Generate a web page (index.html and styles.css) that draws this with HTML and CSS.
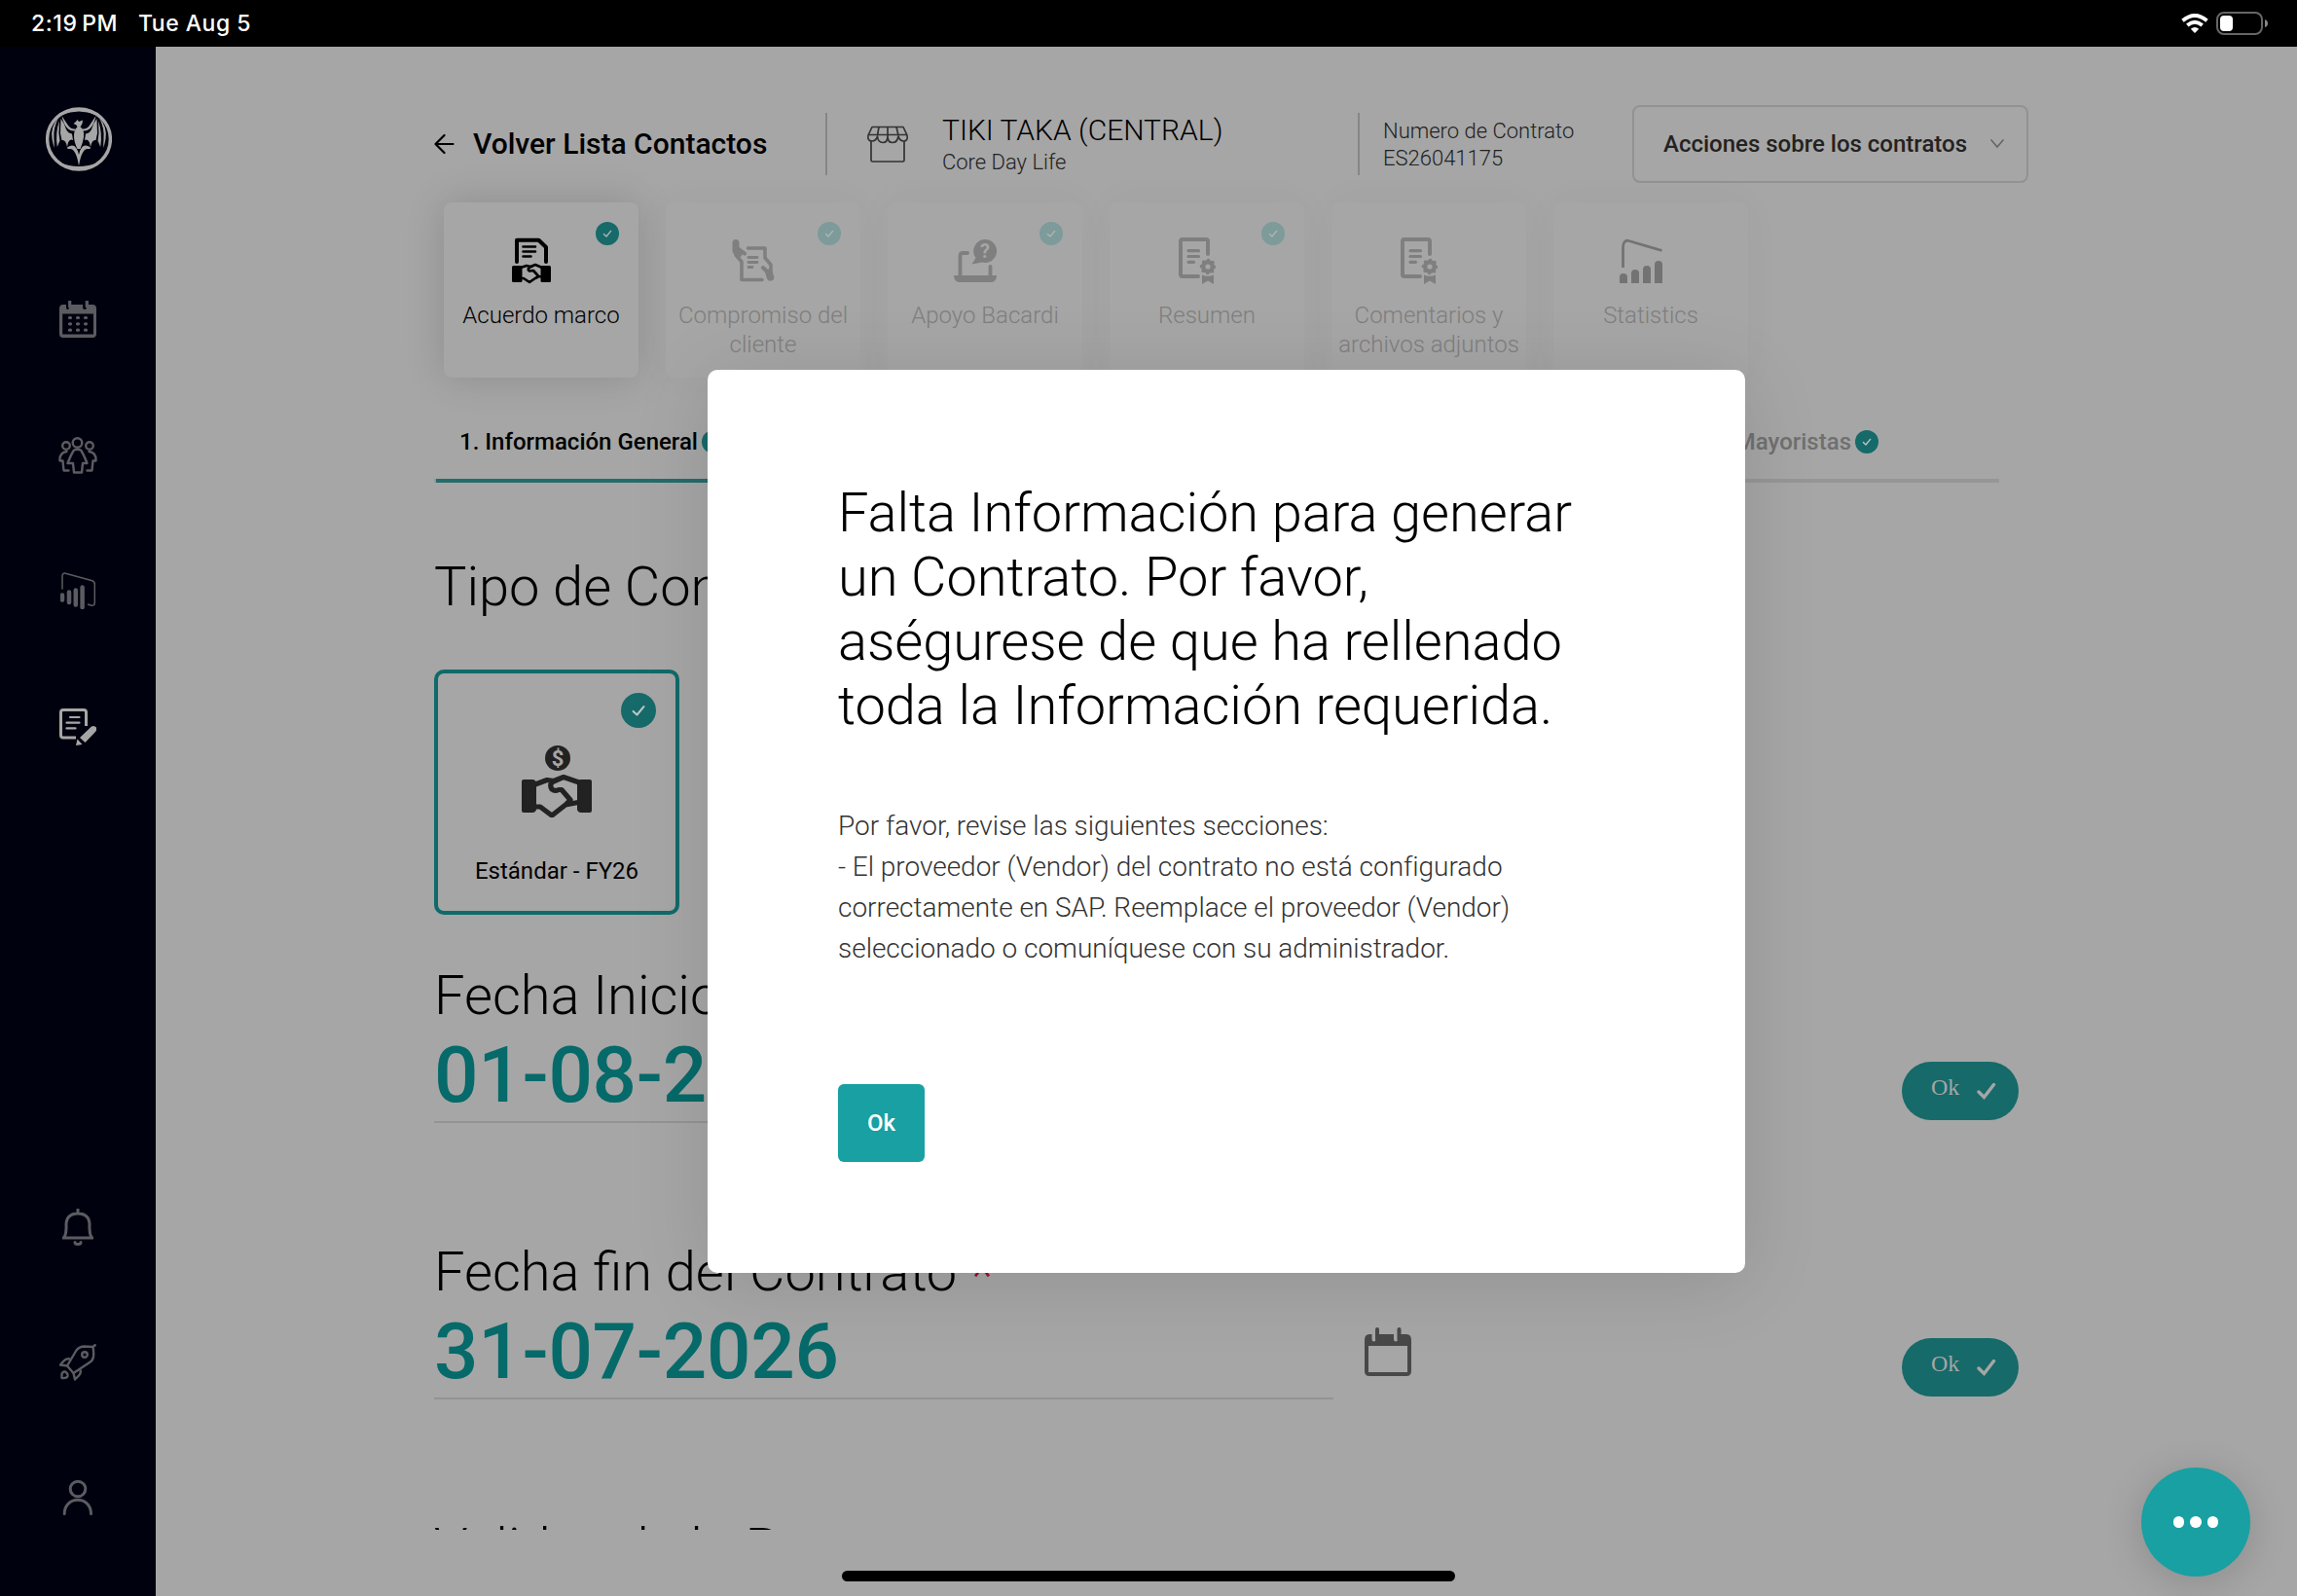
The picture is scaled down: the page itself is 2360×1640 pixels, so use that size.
FILE: index.html
```html
<!DOCTYPE html>
<html lang="es">
<head>
<meta charset="utf-8">
<title>Contratos</title>
<link rel="stylesheet" href="styles.css">
</head>
<body>
<svg class="defs" width="0" height="0">
  <symbol id="check" viewBox="0 0 24 24"><path d="M8.4 12.6 11 15 15.6 9.4" fill="none" stroke="currentColor" stroke-width="1.4" stroke-linecap="round" stroke-linejoin="round"/></symbol>
  <symbol id="certificate" viewBox="0 0 38 48">
    <path d="M20 40H4Q2 40 2 38V4Q2 2 4 2H28Q30 2 30 4V17" fill="none" stroke="currentColor" stroke-width="4" stroke-linecap="round"/>
    <path d="M10 13.7H20.500M10 19.500H20.500M10 25.300H15.500" stroke="currentColor" stroke-width="3.200" stroke-linecap="round"/>
    <circle cx="30" cy="30" r="4.800" fill="none" stroke="currentColor" stroke-width="4.400"/>
    <circle cx="30" cy="30" r="7" fill="none" stroke="currentColor" stroke-width="2.600" stroke-linecap="round" stroke-dasharray="0.500 4.998"/>
    <path d="M24 38.500Q30 41 36 38.500V48L30 44.500 24 48Z" fill="currentColor"/>
  </symbol>
  <symbol id="calendar" viewBox="0 0 48 50">
    <path d="M0 13Q0 7 5 7H7.500V12Q7.500 14.500 9.500 14.500T11.500 12V7H30V12Q30 14.500 32 14.500T34 12V7H43Q48 7 48 13V45Q48 50 43 50H5Q0 50 0 45ZM4 19V46H44V19Z" fill="currentColor" fill-rule="evenodd"/>
    <path d="M13 2V12M35.500 2V12" stroke="currentColor" stroke-width="4" stroke-linecap="round"/>
  </symbol>
</svg>

<header class="status">
  <span class="status-time">2:19&#8201;PM</span>
  <span class="status-date">Tue Aug 5</span>
  <svg class="wifi" width="28" height="20" viewBox="0 0 28 20" fill="none" stroke="#fff" stroke-width="3.800"><path d="M1.500 7.200Q14-3.200 26.500 7.200"/><path d="M6.300 12Q14 5.600 21.700 12"/><path d="M14 20 9.800 15.800Q14 12 18.200 15.800Z" fill="#fff" stroke="none"/></svg>
  <svg class="battery" width="54" height="24" viewBox="0 0 54 24"><rect x="1" y="1" width="46" height="22" rx="7" fill="none" stroke="#666" stroke-width="2"/><rect x="4" y="4" width="13" height="16" rx="4" fill="#fff"/><path d="M50 8Q53 9 53 12T50 16Z" fill="#888"/></svg>
</header>

<div class="shell">
  <nav class="sidebar">
    <svg class="logo" width="68" height="66" viewBox="0 0 68 66">
      <ellipse cx="34" cy="33" rx="32.400" ry="31" fill="none" stroke="currentColor" stroke-width="3.400"/>
      <path d="M16 8Q34-3 52 8 34 1 16 8ZM14 57Q34 71 54 57 34 65 14 57Z" fill="currentColor"/>
      <g id="wing" fill="currentColor">
        <path d="M16.500 9Q21 16 23.500 19.500 26 23 30.500 22.500L30 24.500Q26 25 23 22.500 18 18 16.500 9Z"/>
        <path d="M15.500 12Q19.500 17 21 23 23 27 27 27.500L28 34Q25 32 23 36.500L22 41Q20.500 33 16.500 34L15 27Z"/>
        <path d="M14 14 13.500 27 14.500 34.500 11.800 41Q9.500 27 14 14Z"/>
        <path d="M13 11.500Q4.500 20 6.500 33L8.500 42Q9 38 8.500 33 7.500 21 13 11.500Z"/>
      </g>
      <use href="#wing" transform="matrix(-1 0 0 1 68 0)"/>
      <path d="M28.500 17 30.500 15.500 32.500 13 34 15 38 13.500 37.500 17 35.500 20.500Q40 23 39 31 38 37 35.500 43H32.500Q29 36 29 30 29 23 32.500 20.500L31.500 18.500Z" fill="currentColor"/>
      <path d="M22 41.500Q31 35 34 49 37 35 46 41.500 46 43.500 44 43 37 41.500 34 60.500 31 41.500 24 43 22 43.500 22 41.500Z" fill="currentColor"/>
    </svg>
    <div class="nav-group nav-main">
      <svg width="38" height="38" viewBox="0 0 38 38"><path d="M0 8Q0 4 4 4H7V7Q7 9 8.500 9T10 7V4H24V7Q24 9 26 9T28 7V4H34Q38 4 38 8V34Q38 38 34 38H4Q0 38 0 34ZM3.200 13.500V34.500H35V13.500Z" fill="currentColor" fill-rule="evenodd"/><path d="M10.700 0V7M28.300 0V7" stroke="currentColor" stroke-width="3.200"/><path d="M10.500 17.500h1M18.500 17.500h1M26.500 17.500h1M10.500 23.800h1M18.500 23.800h1M26.500 23.800h1M10.500 30.200h1M18.500 30.200h1M26.500 30.200h1" stroke="currentColor" stroke-width="3.200" stroke-linecap="round"/></svg>
      <svg width="40" height="38" viewBox="0 0 40 38" fill="none" stroke="currentColor" stroke-width="2.400" stroke-linejoin="round" stroke-linecap="round"><circle cx="19.500" cy="6" r="4.800"/><circle cx="8" cy="9" r="3.800"/><circle cx="32" cy="9" r="3.800"/><path d="M16 13.500Q19.500 12 23 13.500 26 18 29.500 27H25L24 36.500H16L15 27H9.500Q13 18 16 13.500Z"/><path d="M8.500 15Q1 16 1.500 24.500H4.500L5.500 34.500H10.500M31.500 15Q39 16 38.500 24.500H35.500L34.500 34.500H29.500"/></svg>
      <svg width="36" height="38" viewBox="0 0 36 38" fill="none" stroke="currentColor"><path d="M2 17.500V4Q2 .5 5.500 1.200L32 8.500Q35.300 9.500 35.300 12V31Q35.300 35 31.500 34L28 33" stroke-width="1.500"/><path d="M2 23.500V28.500M9 20.500V31M15.800 18.500V33.500M22.600 15.500V36" stroke-width="4.500" stroke-linecap="round"/></svg>
      <svg class="current" width="38" height="38" viewBox="0 0 38 38"><path d="M17 30H4Q1.500 30 1.500 27.500V4Q1.500 1.500 4 1.500H25Q27.500 1.500 27.500 4V18" fill="none" stroke="currentColor" stroke-width="3"/><path d="M11 9H20.500M7.500 14.700H20.500M7.500 20.400H16.500" stroke="currentColor" stroke-width="2.200" stroke-linecap="round"/><path d="M21 30 33 18.500Q36 17 38 19.500 39 22 37 24L26.500 35Z" fill="currentColor"/><path d="M18.500 31.500 23.500 37 17 38Z" fill="currentColor"/></svg>
    </div>
    <div class="nav-group nav-foot">
      <svg width="32" height="38" viewBox="0 0 32 38" fill="none" stroke="currentColor" stroke-width="3"><path d="M16 0V4M2 30Q4.500 25 4 17 4 5 16 5T28 17Q27.500 25 30 30ZM0 30H32"/><path d="M13 34.500Q13 36.500 16 36.500T19 34.500" stroke-linecap="round"/></svg>
      <svg width="38" height="38" viewBox="0 0 38 38" fill="none" stroke="currentColor" stroke-width="2.400" stroke-linejoin="round"><path d="M8 22.500 17.500 6.500Q20 3 25 2.500L34.500 3Q35.500 8 35 13 34.500 17 31 19L14.500 30ZM34.500 3 37.500 .5"/><circle cx="26" cy="11" r="2.800"/><path d="M11 15.500Q7 14.500 4 18L1 21.500 8 22.500M14.500 30 16 36.500 20 32.500Q22.500 30 21.500 26.500M2.500 35V31Q3 28 6 28.500 9 30 8.500 33 8 35.500 2.500 35Z"/></svg>
      <svg width="32" height="38" viewBox="0 0 32 38" fill="none" stroke="currentColor" stroke-width="3" stroke-linecap="round"><circle cx="16" cy="10" r="7.800"/><path d="M2.200 35.500C2.200 16.500 29.500 16.500 29.500 35.500"/></svg>
    </div>
  </nav>

  <main class="page">
    <div class="topbar">
      <a class="back"><svg width="22" height="22" viewBox="0 0 22 22" fill="none" stroke="currentColor" stroke-width="2.200" stroke-linecap="round" stroke-linejoin="round"><path d="M19.500 11H1.500M10.500 2 1.500 11 10.500 20"/></svg><span>Volver Lista Contactos</span></a>
      <div class="account">
        <svg width="44" height="40" viewBox="0 0 44 40" fill="none" stroke="#333" stroke-width="1.700" stroke-linejoin="round"><path d="M6 2.500H38L42 11Q43 17 38.500 17 34.500 17 33 12 32 18.500 27 18.500 22 18.500 22 12 22 18.500 17 18.500 12 18.500 11.500 12 10 17 6 17 1 17 2 11ZM2 10.500H42M13 2.500 11.500 11M22 2.500V12M31 2.500 33 11"/><path d="M5 17V36.500Q5 38 6.500 38H37.500Q39 38 39 36.500V17"/></svg>
        <div><div class="account-name">TIKI TAKA (CENTRAL)</div><div class="small">Core Day Life</div></div>
      </div>
      <div class="number small">Numero de Contrato<br>ES26041175</div>
      <div class="actions"><span>Acciones sobre los contratos</span><svg width="16" height="12" viewBox="0 0 16 12"><path d="M2 2 8 9 14 2" fill="none" stroke="#666" stroke-width="1.700" stroke-linecap="round"/></svg></div>
    </div>

    <div class="steps">
      <div class="step active"><svg class="badge"><use href="#check"/></svg>
        <svg width="40" height="48" viewBox="0 0 40 48"><path d="M5 25V2.700H27.500L35 10V25" fill="none" stroke="currentColor" stroke-width="4" stroke-linecap="round" stroke-linejoin="round"/><path d="M11.500 9.500H24M11.500 14.500H24M11.500 19.500H19.500" stroke="currentColor" stroke-width="2.600" stroke-linecap="round"/><rect y="29" width="10.500" height="17" rx="1.500"/><rect x="29.500" y="29" width="10.500" height="17" rx="1.500"/><path d="M9 31 15 29 19 30 24 28 31 31M9 42H12L18 46 26 40.500 31 40M22 29 17.500 31Q16 33 18 34.500L22 34 27 39.500 25 42" fill="none" stroke="currentColor" stroke-width="2.700" stroke-linejoin="round"/></svg>
        <span>Acuerdo marco</span></div>
      <div class="step"><svg class="badge"><use href="#check"/></svg>
        <svg width="44" height="44" viewBox="0 0 44 44" fill="none" stroke="currentColor" stroke-linecap="round" stroke-linejoin="round"><path d="M16.500 9H34V19L40 26V34" stroke-width="3.500"/><path d="M4 10V16L10 23V41.500H31" stroke-width="3.500"/><path d="M4 3.500V12L7 15" stroke-width="7"/><path d="M7 10 13 14.500M32 29 38 35" stroke-width="4"/><path d="M38 34 39.500 39" stroke-width="7.500"/><path d="M17 18.500H26M17 23.500H26M17 28.500H21" stroke-width="2.800"/></svg>
        <span>Compromiso del cliente</span></div>
      <div class="step"><svg class="badge"><use href="#check"/></svg>
        <svg width="44" height="44" viewBox="0 0 44 44"><path d="M14 14H9.500Q6.500 14 6.500 17V38M37.500 28V38" fill="none" stroke="currentColor" stroke-width="3.800" stroke-linecap="round"/><path d="M0 37H44V38Q43 44 38 44H6Q1 44 0 38Z"/><path d="M32 0A12 12 0 1 1 29 23.600L18.500 25.500 22.500 19A12 12 0 0 1 32 0Z"/><text x="32" y="18.500" class="glyph" font-size="20">?</text></svg>
        <span>Apoyo Bacardi</span></div>
      <div class="step"><svg class="badge"><use href="#check"/></svg><svg width="38" height="48"><use href="#certificate"/></svg><span>Resumen</span></div>
      <div class="step"><svg width="38" height="48"><use href="#certificate"/></svg><span>Comentarios y archivos adjuntos</span></div>
      <div class="step stats"><svg width="44" height="46" viewBox="0 0 44 46"><path d="M3.500 30V9Q4 1 9.500 2.500L43.500 12.500" fill="none" stroke="currentColor" stroke-width="2.800"/><path d="M0 46V40Q0 36 4 36T8 40V46ZM12 46V36Q12 32 16 32T20 36V46ZM24 46V32Q24 28 28 28T32 32V46ZM36 46V27Q36 23 40 23T44 27V46Z"/></svg><span>Statistics</span></div>
    </div>

    <div class="tabs">
      <div class="tab tab-active">1. Información General<svg class="badge"><use href="#check"/></svg></div>
      <div class="tab">4. Mayoristas<svg class="badge"><use href="#check"/></svg></div>
    </div>

    <section class="scroller">
      <h2>Tipo de Contrato</h2>
      <div class="type-card">
        <svg class="badge"><use href="#check"/></svg>
        <svg width="72" height="74" viewBox="0 0 72 74"><circle cx="37" cy="13" r="13"/><text x="37" y="21" class="glyph" font-size="22">$</text><path d="M0 37Q0 35 2 35H11Q14 35 15 38V66Q14 69 11 69H2Q0 69 0 67ZM72 37Q72 35 70 35H61Q58 35 57 38V66Q58 69 61 69H70Q72 69 72 67Z"/><path d="M14 40 26 35.500 33 36.500 43 32.500 59 38M14 63H19L31 72 45 61 58 58.500M41 33.500 31 38Q28.500 41 31 45 34 47.500 38 45.500H41L50 56 45 61" fill="none" stroke="currentColor" stroke-width="5.200" stroke-linejoin="round"/></svg>
        <span>Estándar - FY26</span>
      </div>
      <div class="field">
        <div class="field-main"><h2>Fecha Inicio</h2><div class="date">01-08-2025</div></div>
        <svg class="cal" width="48" height="50"><use href="#calendar"/></svg>
        <div class="pill">Ok<svg width="22" height="20" viewBox="0 0 22 20"><path d="M3 11 8.500 16.500 18.500 3.500" fill="none" stroke="currentColor" stroke-width="3.400" stroke-linecap="round"/></svg></div>
      </div>
      <div class="field">
        <div class="field-main"><h2>Fecha fin del Contrato <i>*</i></h2><div class="date">31-07-2026</div></div>
        <svg class="cal" width="48" height="50"><use href="#calendar"/></svg>
        <div class="pill">Ok<svg width="22" height="20" viewBox="0 0 22 20"><path d="M3 11 8.500 16.500 18.500 3.500" fill="none" stroke="currentColor" stroke-width="3.400" stroke-linecap="round"/></svg></div>
      </div>
      <h2>Validez de la Propuesta</h2>
    </section>
  </main>
</div>

<div class="modal">
  <h1>Falta Información para generar un Contrato. Por favor, aségurese de que ha rellenado toda la Información requerida.</h1>
  <p>Por favor, revise las siguientes secciones:<br>- El proveedor (Vendor) del contrato no está configurado correctamente en SAP. Reemplace el proveedor (Vendor) seleccionado o comuníquese con su administrador.</p>
  <button>Ok</button>
</div>
<div class="fab"><b></b><b></b><b></b></div>
<div class="home"></div>
</body>
</html>
```
FILE: styles.css
```css
* { box-sizing: border-box; }
body {
  margin: 0;
  width: 2360px;
  height: 1640px;
  position: relative;
  overflow: hidden;
  display: flex;
  flex-direction: column;
  background: #a6a6a6;
  color: #000;
  font-family: Roboto, "Liberation Sans", sans-serif;
}
svg { display: block; flex: none; fill: currentColor; }
.defs { position: absolute; }

.status {
  height: 48px;
  flex: none;
  background: #000;
  color: #fff;
  display: flex;
  align-items: center;
  padding: 0 29px 0 32px;
  font: 500 23px/48px Inter, sans-serif;
}
.status-time { width: 110px; white-space: nowrap; letter-spacing: .6px; }
.status-date { letter-spacing: .5px; }
.wifi { margin-left: auto; margin-right: 8px; fill: none; }

.shell { flex: 1; display: flex; min-height: 0; }
.sidebar {
  width: 160px;
  background: #00010e;
  color: #5b5b62;
  display: flex;
  flex-direction: column;
  align-items: center;
  padding: 62px 0 82px;
}
.logo { color: #a6a6a6; margin-left: 2px; }
.nav-group { display: flex; flex-direction: column; align-items: center; }
.nav-main { margin-top: 133px; gap: 101.6px; }
.nav-foot { margin-top: auto; gap: 101px; }
.current { color: #a6a6a6; }
.sidebar svg[fill="none"] { fill: none; }

.page { flex: 1; padding: 60px 276px 0 286px; }
.topbar { display: flex; align-items: center; height: 80px; }
.back {
  display: flex;
  align-items: center;
  gap: 18px;
  width: 402px;
  font-size: 30px;
  font-weight: 500;
  line-height: 38px;
  padding-bottom: 1px;
}
.back svg, .account svg { fill: none; }
.account {
  display: flex;
  align-items: center;
  gap: 34px;
  width: 547px;
  height: 64px;
  padding-left: 40px;
  border-left: 2px solid #868686;
}
.account-name { font-size: 30px; font-weight: 300; line-height: 36px; }
.small { font-size: 22px; font-weight: 300; line-height: 28px; color: #222; }
.account .small { padding-top: 1px; margin-bottom: -1px; }
.number {
  height: 64px;
  width: 282px;
  padding: 5px 0 0 24px;
  border-left: 2px solid #868686;
}
.actions {
  height: 80px;
  width: 407px;
  display: flex;
  align-items: center;
  justify-content: space-between;
  padding: 0 22px 0 30px;
  border: 2px solid #929292;
  border-radius: 8px;
  font-size: 24px;
  font-weight: 500;
  color: #222;
}

.steps { display: flex; gap: 28px; margin: 20px 0 0 10px; }
.step {
  position: relative;
  width: 200px;
  height: 180px;
  padding-top: 36px;
  display: flex;
  flex-direction: column;
  align-items: center;
  border-radius: 8px;
  background: #a6a6a6;
  box-shadow: 0 0 40px rgba(0, 0, 0, .035);
  color: #7f7f7f;
  font-size: 24px;
  font-weight: 300;
  line-height: 30px;
  text-align: center;
}
.step.active { color: #000; box-shadow: 0 0 40px rgba(0, 0, 0, .15); }
.step > svg:not(.badge) { height: 48px; margin-right: 20px; }
.step > svg[fill="none"] { fill: none; }
.step > span { margin-top: 17px; }
.stats { color: #737373; }
.stats > span { color: #7f7f7f; }
.glyph {
  fill: #a6a6a6;
  font-family: Roboto, sans-serif;
  font-weight: 700;
  text-anchor: middle;
}
.badge { width: 24px; height: 24px; border-radius: 50%; background: #166a69; color: #b9c6c6; }
.step .badge { position: absolute; top: 20px; right: 20px; background: #7c9b9a; color: #b3b3b3; }
.step.active .badge { background: #166a69; }

.tabs {
  display: flex;
  justify-content: space-between;
  width: 1608px;
  margin-top: 54px;
  padding-right: 124px;
  border-bottom: 4px solid #969696;
}
.tab {
  display: flex;
  gap: 4px;
  height: 50px;
  font-size: 24px;
  font-weight: 500;
  line-height: 24px;
  color: #707070;
}
.tab-active {
  margin: 0 0 -4px 2px;
  height: 54px;
  padding: 0 24px;
  border-bottom: 4px solid #246c6b;
  color: #000;
}

.scroller { margin-top: 74px; height: 1002px; overflow: hidden; width: 1638px; }
h2 { margin: 0; font-size: 56px; font-weight: 300; line-height: 66px; white-space: nowrap; }
h2 i { position: relative; top: 4px; font-style: normal; color: #a0102c; }
.type-card {
  position: relative;
  width: 252px;
  height: 252px;
  margin: 52px 0 50px;
  padding-top: 74px;
  display: flex;
  flex-direction: column;
  align-items: center;
  border: 4px solid #116a6a;
  border-radius: 10px;
  color: #222;
}
.type-card .badge { position: absolute; top: 20px; right: 20px; width: 36px; height: 36px; }
.type-card span { margin-top: 40px; font-size: 24px; line-height: 30px; color: #000; }
.field { display: flex; height: 284px; }
.field-main { width: 924px; height: 164px; border-bottom: 2px solid #939393; }
.date { font-size: 80px; font-weight: 500; line-height: 94px; margin-top: 2px; letter-spacing: -.25px; color: #056a69; }
.cal { margin: 90px 0 0 32px; color: #484848; }
.pill {
  display: flex;
  width: 120px;
  height: 60px;
  margin: 101px 10px 0 auto;
  padding: 12px 22px 0 30px;
  justify-content: space-between;
  border-radius: 30px;
  background: #166a69;
  color: #a6a6a6;
  font: 24px/28px "Liberation Serif", serif;
}
.pill svg { margin-top: 8px; }

.modal {
  position: absolute;
  left: 727px;
  top: 380px;
  width: 1066px;
  height: 928px;
  padding: 114px 134px;
  border-radius: 10px;
  background: #fff;
  box-shadow: 0 10px 80px rgba(0, 0, 0, .12);
}
h1 { margin: 0; font-size: 56px; font-weight: 300; line-height: 66px; letter-spacing: -.04px; }
.modal p { margin: 70px 0 118px; font-size: 28px; font-weight: 300; line-height: 42px; letter-spacing: -.02px; color: #333; }
button {
  display: block;
  width: 89px;
  height: 80px;
  padding: 0;
  border: 0;
  border-radius: 6px;
  background: #18a0a2;
  color: #fff;
  font: 500 24px Roboto, sans-serif;
}
.fab {
  position: absolute;
  left: 2200px;
  top: 1508px;
  width: 112px;
  height: 112px;
  display: flex;
  align-items: center;
  justify-content: center;
  gap: 6px;
  border-radius: 50%;
  background: #18a0a2;
  box-shadow: 0 6px 40px rgba(0, 0, 0, .16);
}
.fab b { width: 11.5px; height: 11.5px; border-radius: 50%; background: #fff; }
.home {
  position: absolute;
  left: 865px;
  top: 1614px;
  width: 630px;
  height: 11px;
  border-radius: 6px;
  background: #000;
}
```
